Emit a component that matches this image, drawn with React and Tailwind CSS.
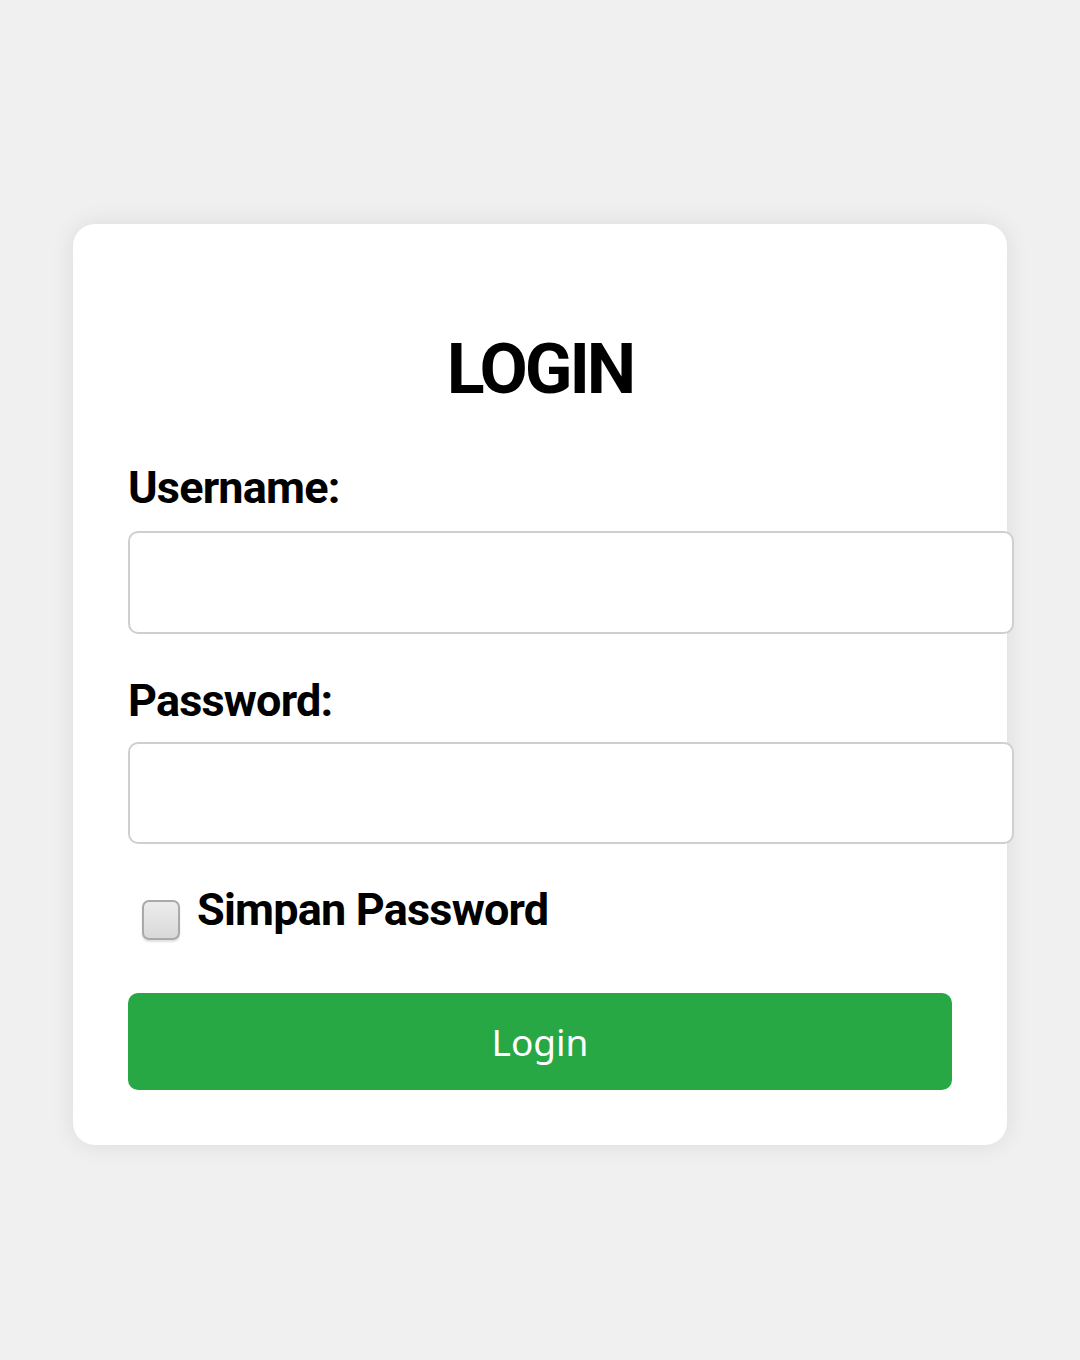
export default function App() {
	return (
		<div className="min-h-screen bg-[#f0f0f0] px-[73px] pt-[224px] font-['Roboto',sans-serif]">
			<div className="w-[934px] rounded-[22px] bg-white px-[55px] pt-[110px] pb-[55px] shadow-[0_0_24px_rgba(0,0,0,0.09)]">
				<h2 className="text-center text-[70px] leading-none font-bold tracking-[-3px] text-black">
					LOGIN
				</h2>

				<form onSubmit={(e) => e.preventDefault()}>
					<label
						htmlFor="username"
						className="mt-[61px] block text-[45px] leading-none font-bold tracking-[-0.8px] text-black"
					>
						Username:
					</label>
					<input
						id="username"
						type="text"
						className="mt-[21px] block h-[103px] w-[886px] max-w-none rounded-[10px] border-2 border-[#cfcfcf] bg-white px-4 outline-none"
					/>

					<label
						htmlFor="password"
						className="mt-[44px] block text-[45px] leading-none font-bold tracking-[-0.8px] text-black"
					>
						Password:
					</label>
					<input
						id="password"
						type="password"
						className="mt-[19px] block h-[102px] w-[886px] max-w-none rounded-[10px] border-2 border-[#cfcfcf] bg-white px-4 outline-none"
					/>

					<label className="mt-[43px] flex items-start">
						<span className="mt-[13px] ml-[14px] block h-[40px] w-[38px] rounded-[7px] border-2 border-[#a9a9a9] bg-gradient-to-b from-[#ececec] to-[#d9d9d9] shadow-[0_2px_2px_rgba(0,0,0,0.12)]" />
						<span className="ml-[17px] text-[45px] leading-none font-bold tracking-[-0.8px] text-black">
							Simpan Password
						</span>
					</label>

					<button
						type="submit"
						className="mt-[53px] block h-[97px] w-full rounded-[10px] bg-[#28a745] font-['Noto_Sans',sans-serif] text-[37px] text-white"
					>
						Login
					</button>
				</form>
			</div>
		</div>
	)
}
